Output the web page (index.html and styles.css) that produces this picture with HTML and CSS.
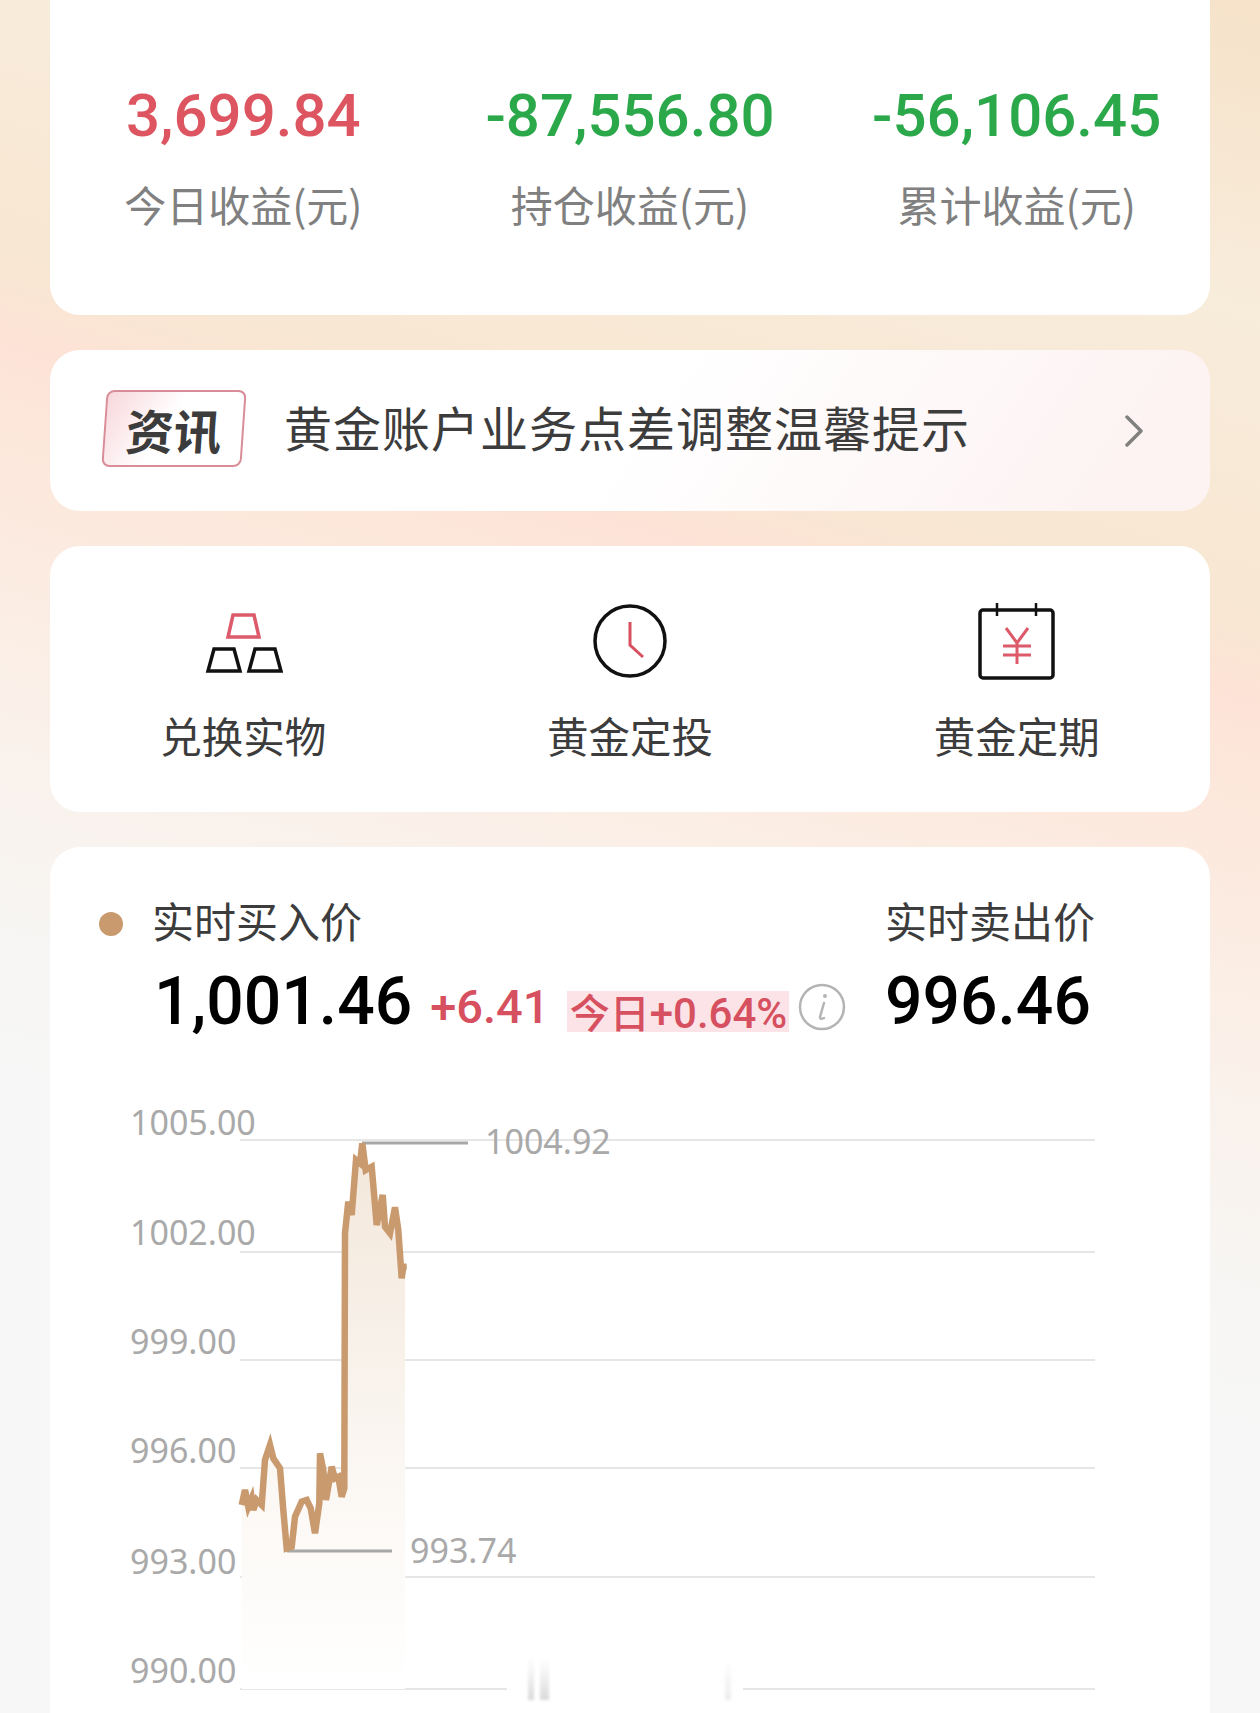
FILE: index.html
```html
<!DOCTYPE html>
<html lang="zh-CN">

<head>
    <meta charset="UTF-8">
    <meta name="viewport" content="width=device-width, initial-scale=1.0">
    <title>黄金账户</title>
    <link rel="stylesheet" href="styles.css">
</head>

<body>

<div class="page">

    <!-- Earnings -->
    <div class="card earnings">
        <div class="earning">
            <div class="earning-value red">3,699.84</div>
            <div class="earning-label">今日收益(元)</div>
        </div>
        <div class="earning">
            <div class="earning-value green">-87,556.80</div>
            <div class="earning-label">持仓收益(元)</div>
        </div>
        <div class="earning">
            <div class="earning-value green">-56,106.45</div>
            <div class="earning-label">累计收益(元)</div>
        </div>
    </div>

    <!-- News -->
    <div class="card news">
        <div class="news-badge"><span>资讯</span></div>
        <div class="news-text">黄金账户业务点差调整温馨提示</div>
        <svg class="news-arrow" width="18" height="32" viewBox="0 0 18 32">
            <path d="M2 2 L16 16 L2 30" fill="none" stroke="#808080" stroke-width="3.5" stroke-linecap="round" stroke-linejoin="round"/>
        </svg>
    </div>

    <!-- Shortcuts -->
    <div class="card shortcuts">
        <div class="shortcut">
            <svg class="shortcut-icon" width="80" height="80" viewBox="0 0 80 80">
                <path d="M30 13 H51 L56 35 H25 Z" fill="none" stroke="#dc5a6a" stroke-width="3.5"/>
                <path d="M11 47 H31 L37 69 H5 Z" fill="none" stroke="#111" stroke-width="3.5"/>
                <path d="M52 47 H72 L78 69 H46 Z" fill="none" stroke="#111" stroke-width="3.5"/>
            </svg>
            <div class="shortcut-label">兑换实物</div>
        </div>
        <div class="shortcut">
            <svg class="shortcut-icon" width="80" height="80" viewBox="0 0 80 80">
                <circle cx="40" cy="39" r="35" fill="none" stroke="#111" stroke-width="3.5"/>
                <path d="M40 20 V43 L53 55" fill="none" stroke="#d6505f" stroke-width="3"/>
            </svg>
            <div class="shortcut-label">黄金定投</div>
        </div>
        <div class="shortcut">
            <svg class="shortcut-icon" width="80" height="80" viewBox="0 0 80 80">
                <rect x="3" y="8" width="73" height="68" rx="3" fill="none" stroke="#111" stroke-width="3.5"/>
                <path d="M20 1 V14 M59 1 V14" fill="none" stroke="#111" stroke-width="2.5"/>
                <path d="M29 26 L40 41 L51 26 M26 44 H54 M26 53 H54 M40 41 V62" fill="none" stroke="#dc5a6a" stroke-width="3"/>
            </svg>
            <div class="shortcut-label">黄金定期</div>
        </div>
    </div>

    <!-- Realtime price and chart -->
    <div class="card price">
        <div class="price-head">
            <div class="price-buy">
                <div class="price-title"><span class="dot"></span>实时买入价</div>
                <div class="price-row">
                    <span class="price-value">1,001.46</span>
                    <span class="price-change">+6.41</span>
                    <span class="price-today"><span class="today-word">今日</span>+0.64%</span>
                    <svg class="info-icon" width="48" height="50" viewBox="0 0 48 50">
                        <circle cx="24" cy="25" r="22" fill="none" stroke="#b4b4b4" stroke-width="2.5"/>
                        <circle cx="27" cy="14" r="2" fill="#b4b4b4"/>
                        <path d="M26 21 L22 35 Q22 38 26 36" fill="none" stroke="#b4b4b4" stroke-width="2.5" stroke-linecap="round"/>
                    </svg>
                </div>
            </div>
            <div class="price-sell">
                <div class="price-title">实时卖出价</div>
                <div class="price-row">
                    <span class="price-value">996.46</span>
                </div>
            </div>
        </div>

        <svg class="chart" width="1000" height="613" viewBox="0 0 1000 613">
            <defs>
                <linearGradient id="areaFill" x1="0" y1="0" x2="0" y2="1">
                    <stop offset="0" stop-color="#f3e7da"/>
                    <stop offset="0.6" stop-color="#fbf7f3"/>
                    <stop offset="1" stop-color="#ffffff"/>
                </linearGradient>
                <linearGradient id="markFill" x1="0" y1="0" x2="0" y2="1">
                    <stop offset="0" stop-color="#e4e4e4" stop-opacity="0"/>
                    <stop offset="1" stop-color="#d8d8d8"/>
                </linearGradient>
            </defs>

            <g class="grid">
                <line x1="140" y1="40" x2="995" y2="40"/>
                <line x1="140" y1="152" x2="995" y2="152"/>
                <line x1="140" y1="260" x2="995" y2="260"/>
                <line x1="140" y1="368" x2="995" y2="368"/>
                <line x1="140" y1="477" x2="995" y2="477"/>
                <line x1="140" y1="589" x2="407" y2="589"/>
                <line x1="643" y1="589" x2="995" y2="589"/>
            </g>

            <!-- faint marks at the gap in the bottom line -->
            <g class="marks">
                <rect x="428" y="557" width="6" height="43" fill="url(#markFill)"/>
                <rect x="440" y="557" width="9" height="43" fill="url(#markFill)"/>
                <rect x="625" y="557" width="6" height="43" fill="url(#markFill)" opacity="0.5"/>
            </g>

            <g class="axis">
                <text x="30" y="35">1005.00</text>
                <text x="30" y="145">1002.00</text>
                <text x="30" y="254">999.00</text>
                <text x="30" y="363">996.00</text>
                <text x="30" y="474">993.00</text>
                <text x="30" y="583">990.00</text>
            </g>

            <polygon fill="url(#areaFill)" points="141.7,589 141.7,405 145,390 148.3,406.7 151.7,398.3 153.3,410 156.7,400 161.7,405 165,360 170,345 173.3,358.3 180,368.3 183.3,410 186.7,448.3 191.7,446.7 195,416.7 201.7,401.7 206.7,400 210.7,408.3 215,433.3 219.3,403.3 220,353.3 223.3,370 226,400 231.7,366.7 235,378.3 238.3,376.7 241.7,396.7 244.3,388.3 245,133.3 248.3,101.7 251.7,115 256,60 260,63.3 262.3,43.3 265.7,70 271.7,66.7 276.7,125 282.7,95 285,126.7 290,133.3 295,107.3 298.3,130 301.7,178.3 303.3,166.7 305,166.7 305,589"/>

            <g class="marker">
                <line x1="262" y1="43" x2="368" y2="43"/>
                <line x1="187" y1="451" x2="292" y2="451"/>
            </g>

            <polyline class="price-line" points="141.7,405 145,390 148.3,406.7 151.7,398.3 153.3,410 156.7,400 161.7,405 165,360 170,345 173.3,358.3 180,368.3 183.3,410 186.7,448.3 191.7,446.7 195,416.7 201.7,401.7 206.7,400 210.7,408.3 215,433.3 219.3,403.3 220,353.3 223.3,370 226,400 231.7,366.7 235,378.3 238.3,376.7 241.7,396.7 244.3,388.3 245,133.3 248.3,101.7 251.7,115 256,60 260,63.3 262.3,43.3 265.7,70 271.7,66.7 276.7,125 282.7,95 285,126.7 290,133.3 295,107.3 298.3,130 301.7,178.3 303.3,166.7 306.7,166.7"/>

            <g class="axis">
                <text x="385" y="54">1004.92</text>
                <text x="310" y="463">993.74</text>
            </g>
        </svg>
    </div>

</div>

</body>

</html>
```

FILE: styles.css
```css
* {
    box-sizing: border-box;
}

html, body {
    margin: 0;
    height: 100%;
    overflow: hidden;
}

body {
    font-family: "Noto Sans CJK SC", "Noto Sans", sans-serif;
    color: #3c3c3c;
}

.page {
    height: 1713px;
    padding: 0 50px;
    display: flex;
    flex-direction: column;
    gap: 35px;
    background: linear-gradient(196deg, #f6e2c9 0, #f8ecdb 300px, #f8e7d2 590px, #fde3d6 670px, #fbeee5 950px, #f9f2ed 1100px, #f7f6f4 1250px, #f7f7f7 1400px);
}

.card {
    background-color: #fff;
    border-radius: 30px;
}

.red { color: #dd5560; }
.green { color: #2ba84a; }

/* Earnings */
.earnings {
    height: 315px;
    border-radius: 0 0 30px 30px;
    display: grid;
    grid-template-columns: repeat(3, 1fr);
    padding-top: 79px;
    text-align: center;
}

.earning-value {
    font-family: Roboto, sans-serif;
    font-weight: 500;
    font-size: 60px;
    line-height: 74px;
}

.earning-label {
    margin-top: 21px;
    font-size: 42px;
    line-height: 60px;
    color: #808080;
}

/* News */
.news {
    height: 161px;
    display: flex;
    align-items: center;
    padding: 0 67px 0 54px;
    background: linear-gradient(125deg, #fff 50%, #fdf3f3 90%);
}

.news-badge {
    width: 140px;
    height: 77px;
    margin-bottom: 4px;
    display: flex;
    align-items: center;
    justify-content: center;
    border: 2px solid #d98d98;
    border-radius: 8px;
    transform: skewX(-4deg);
    background: linear-gradient(120deg, #f8d7dc 0, #fff 45%);
}

.news-badge span {
    font-size: 48px;
    font-weight: 700;
    color: #3c3c3c;
}

.news-text {
    flex: 1;
    margin-left: 40px;
    margin-bottom: 10px;
    font-size: 48px;
    letter-spacing: 1px;
}

/* Shortcuts */
.shortcuts {
    height: 266px;
    display: grid;
    grid-template-columns: repeat(3, 1fr);
    padding-top: 56px;
}

.shortcut {
    display: flex;
    flex-direction: column;
    align-items: center;
}

.shortcut-icon {
    display: block;
}

.shortcut-label {
    margin-top: 23px;
    font-size: 41.5px;
    line-height: 60px;
}

/* Price */
.price {
    flex: 1;
    border-radius: 30px 30px 0 0;
    padding: 43px 0 0 49px;
    overflow: hidden;
}

.price-head {
    display: flex;
}

.price-buy {
    width: 786px;
}

.price-title {
    display: flex;
    align-items: center;
    padding-left: 53px;
    font-size: 42px;
    line-height: 60px;
    position: relative;
}

.dot {
    position: absolute;
    left: 0;
    top: 22px;
    width: 24px;
    height: 24px;
    border-radius: 50%;
    background-color: #c99a6e;
}

.price-sell .price-title {
    padding-left: 0;
}

.price-row {
    display: flex;
    align-items: center;
    margin-top: 9px;
    padding-left: 55px;
    height: 84px;
    white-space: nowrap;
}

.price-sell .price-row {
    padding-left: 0;
}

.price-value {
    font-family: Roboto, sans-serif;
    font-weight: 500;
    font-size: 66px;
    color: #000;
}

.price-change {
    margin-left: 18px;
    margin-top: 10px;
    font-family: Roboto, sans-serif;
    font-weight: 500;
    font-size: 47px;
    color: #d6505f;
}

.price-today {
    margin-left: 18px;
    margin-top: 20px;
    width: 222px;
    height: 41px;
    line-height: 41px;
    text-align: center;
    font-family: Roboto, sans-serif;
    font-size: 42px;
    font-weight: 500;
    color: #d6505f;
    background-color: #fbe3e8;
}

.today-word {
    font-family: "Noto Sans CJK SC", sans-serif;
    font-size: 40px;
}

.info-icon {
    flex-shrink: 0;
    margin-left: 9px;
    margin-top: 12px;
}

.chart {
    display: block;
    margin-top: 57px;
    margin-left: 1px;
}

.grid line {
    stroke: #e6e6e6;
    stroke-width: 2;
}

.marks {
    filter: blur(1.5px);
}

.axis text {
    font-family: "Noto Sans", sans-serif;
    font-size: 34px;
    fill: #a9a9a9;
}

.marker line {
    stroke: #a8a8a8;
    stroke-width: 3;
}

.price-line {
    fill: none;
    stroke: #c99a6e;
    stroke-width: 6.5;
}
```
